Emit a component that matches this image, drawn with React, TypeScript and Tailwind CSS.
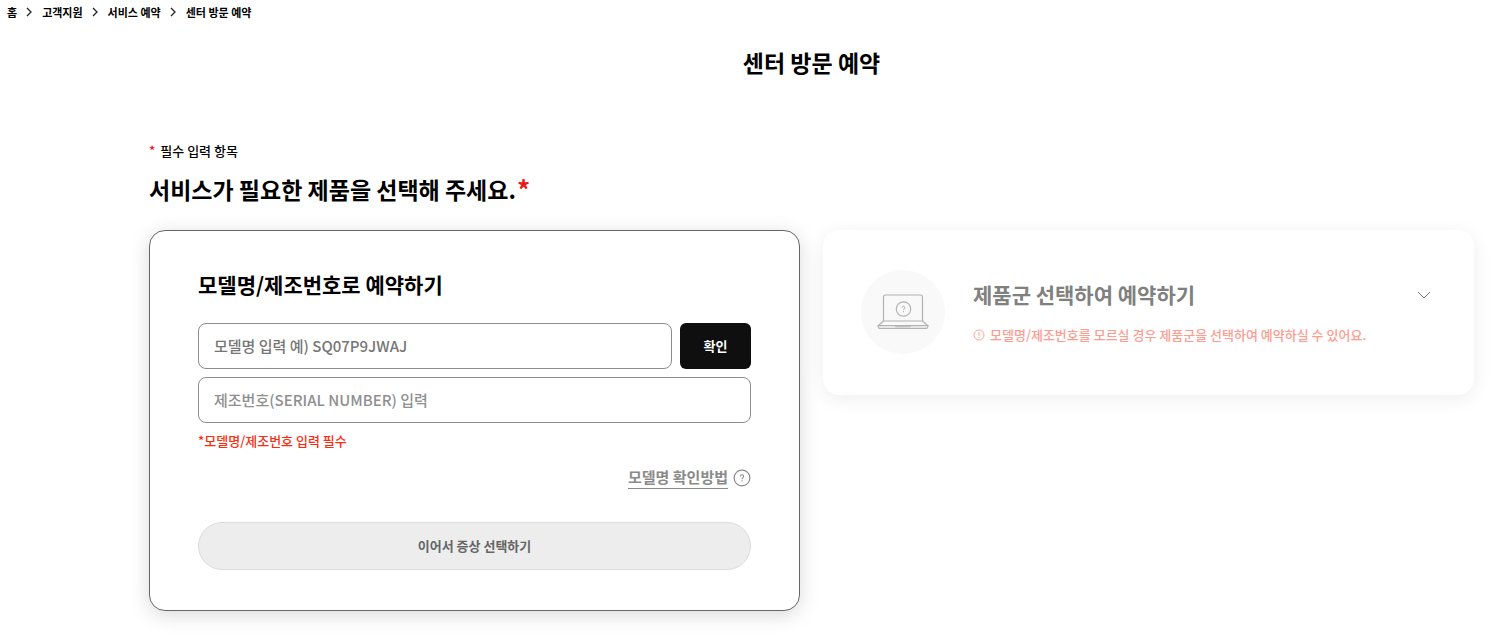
import React, { useState } from "react";

const crumbs = ["홈", "고객지원", "서비스 예약", "센터 방문 예약"];

const QuestionIcon = () => (
  <svg width="18" height="18" viewBox="0 0 18 18" fill="none" stroke="#8a8a8a" aria-hidden="true">
    <circle cx="9" cy="9" r="7.9" strokeWidth="1.2" />
    <path d="M7.4 7.500c0-1.100.7-1.700 1.600-1.700s1.600.6 1.600 1.500c0 1.200-1.600 1.400-1.600 2.900" strokeWidth="1.1" />
    <path d="M9 11.2v1.200" strokeWidth="1.2" />
  </svg>
);

const LaptopIcon = () => (
  <svg width="52" height="36" viewBox="0 0 52 36" fill="none" stroke="#b2b2b2" strokeWidth="1.2" aria-hidden="true">
    <path d="M6.500 27V3a2 2 0 0 1 2-2h35a2 2 0 0 1 2 2v24z" />
    <path d="M6.500 27L1.500 31.500h49L45.500 27" />
    <path d="M1.200 31.500h49.600v1.200a1.800 1.800 0 0 1-1.800 1.800H3a1.800 1.800 0 0 1-1.800-1.800z" fill="#e6e6e6" />
    <path d="M18 31.800h16l-1 1H19z" strokeWidth="0.8" />
    <circle cx="26.500" cy="15" r="7.200" />
    <path d="M25.100 13.700c0-1 .6-1.500 1.400-1.500s1.400.6 1.400 1.400c0 1.100-1.400 1.300-1.400 2.600M26.500 17v1.200" strokeWidth="1" />
  </svg>
);

const App = () => {
  const [model, setModel] = useState("");
  const [serial, setSerial] = useState("");

  return (
    <div className="bg-white text-black font-['Noto_Sans_CJK_KR',sans-serif]">
      <nav aria-label="breadcrumb" className="px-[7px]">
        <ol className="flex h-6 items-center text-[11px] leading-6 font-bold">
          {crumbs.map((name, i) => (
            <li key={name} className="flex items-center">
              {i > 0 && (
                <svg width="6" height="10" viewBox="0 0 6 10" fill="none" stroke="#222" strokeWidth="1.3" className="mr-[10px] ml-[9px]" aria-hidden="true">
                  <path d="M1 1l4 4-4 4" />
                </svg>
              )}
              <a href="#">{name}</a>
            </li>
          ))}
        </ol>
      </nav>

      <main className="pl-[149px] pr-[37px] pb-6">
        <h1 className="pt-[21px] text-center text-[23px] leading-[34px] font-bold">센터 방문 예약</h1>

        <p className="mt-[62px] flex gap-[5px] text-[13px] leading-5 font-medium">
          <span className="text-[#ea1917]">*</span>
          필수 입력 항목
        </p>
        <h2 className="mt-[11px] flex text-[23px] leading-[34px] font-bold">
          서비스가 필요한 제품을 선택해 주세요.
          <span className="ml-px text-[26px] text-[#ea1917]">*</span>
        </h2>

        <div className="mt-6 grid grid-cols-2 items-start gap-[23px]">
          <section className="rounded-2xl border border-[#666] bg-white px-12 pt-[37px] pb-10 shadow-[0_4px_20px_rgba(0,0,0,0.15)]">
            <h3 className="text-[21px] leading-8 font-bold">모델명/제조번호로 예약하기</h3>
            <form onSubmit={(e) => e.preventDefault()}>
              <div className="mt-[23px] flex gap-2">
                <input aria-label="모델명" placeholder="모델명 입력 예) SQ07P9JWAJ" value={model} onChange={(e) => setModel(e.target.value)} className="h-[46px] min-w-0 flex-1 rounded-lg border border-[#8c8c8c] px-[15px] pb-0.5 text-[15px] font-medium placeholder:text-[#767676]" />
                <button type="button" className="h-[46px] w-[71px] rounded-md bg-[#0f0f0f] text-[13px] font-bold text-white">확인</button>
              </div>
              <input aria-label="제조번호" placeholder="제조번호(SERIAL NUMBER) 입력" value={serial} onChange={(e) => setSerial(e.target.value)} className="mt-2 block h-[46px] w-full rounded-lg border border-[#8c8c8c] px-[15px] pb-0.5 text-[15px] font-medium placeholder:text-[#8f8f8f]" />
              <p className="mt-2 text-[13px] leading-5 font-medium text-[#ff2a0e]">*모델명/제조번호 입력 필수</p>
              <div className="mt-[15px] flex items-center justify-end gap-[5px]">
                <a href="#" className="border-b border-[#8a8a8a] text-[15px] leading-[22px] font-bold text-[#8a8a8a]">모델명 확인방법</a>
                <QuestionIcon />
              </div>
              <button type="submit" className="mt-[33px] h-12 w-full rounded-full border border-[#dcdcdc] bg-[#ededed] text-[13px] font-bold text-[#666]">이어서 증상 선택하기</button>
            </form>
          </section>

          <section className="flex rounded-2xl bg-white pt-10 pr-[42px] pb-[41px] pl-[38px] shadow-[0_4px_20px_rgba(0,0,0,0.07)]">
            <div className="flex h-[84px] w-[84px] shrink-0 items-center justify-center rounded-full bg-[#f9f9f9]">
              <LaptopIcon />
            </div>
            <div className="ml-7 min-w-0 flex-1 pt-2">
              <button type="button" className="flex w-full items-center justify-between text-[21px] leading-8 font-bold text-[#808080]">
                제품군 선택하여 예약하기
                <svg width="16" height="9" viewBox="0 0 16 9" fill="none" stroke="#777" strokeWidth="1" className="mt-[3px]" aria-hidden="true">
                  <path d="M2 1l6 6 6-6" />
                </svg>
              </button>
              <p className="mt-[15px] flex items-center gap-[5px] text-[13px] leading-5 font-medium text-[#ff9c90]">
                <svg width="12" height="12" viewBox="0 0 12 12" fill="none" stroke="currentColor" aria-hidden="true">
                  <circle cx="6" cy="6" r="5" strokeWidth="0.9" />
                  <path d="M6 3v3.700M6 7.700v1.200" strokeWidth="1" />
                </svg>
                모델명/제조번호를 모르실 경우 제품군을 선택하여 예약하실 수 있어요.
              </p>
            </div>
          </section>
        </div>
      </main>
    </div>
  );
};

export default App;
